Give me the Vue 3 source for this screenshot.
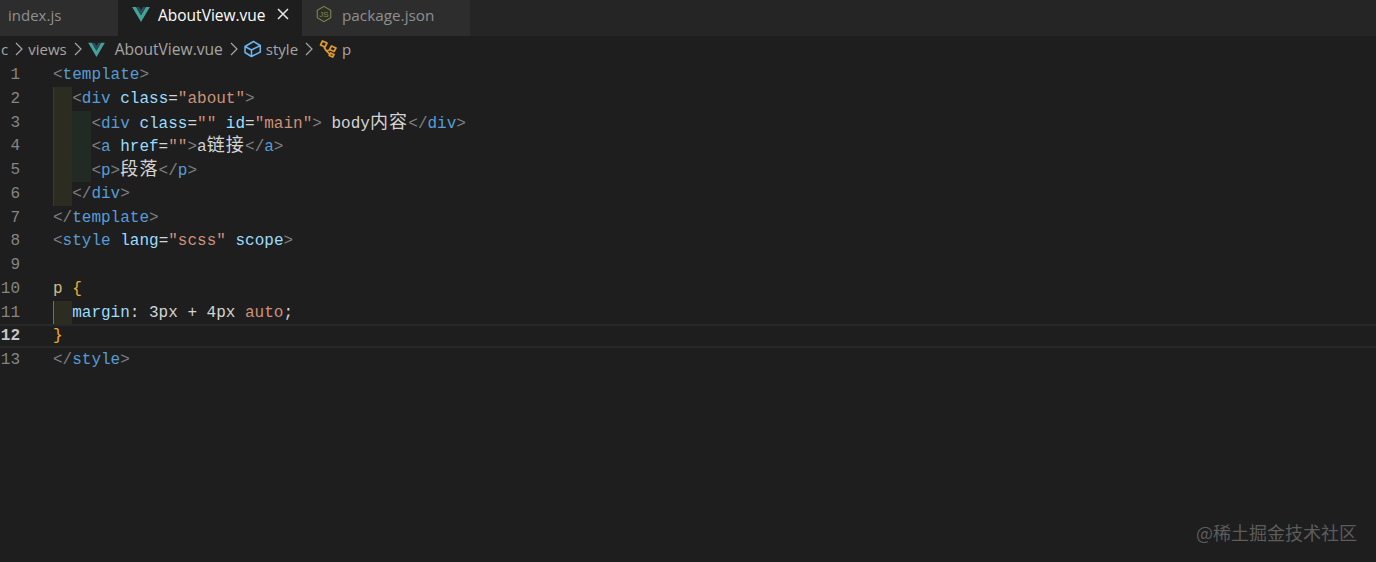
<script setup>
const P = 'pu', T = 'tg', A = 'at', S = 'st', X = 'tx', C = 'cj'
const lines = [
  { guides: [], tokens: [[P, '<'], [T, 'template'], [P, '>']] },
  { guides: ['g1'], tokens: [[P, '<'], [T, 'div'], [X, ' '], [A, 'class'], [X, '='], [S, '"about"'], [P, '>']] },
  { guides: ['g1', 'g2'], tokens: [[P, '<'], [T, 'div'], [X, ' '], [A, 'class'], [X, '='], [S, '""'], [X, ' '], [A, 'id'], [X, '='], [S, '"main"'], [P, '>'], [X, ' body'], [C, '内容'], [P, '</'], [T, 'div'], [P, '>']] },
  { guides: ['g1', 'g2'], tokens: [[P, '<'], [T, 'a'], [X, ' '], [A, 'href'], [X, '='], [S, '""'], [P, '>'], [X, 'a'], [C, '链接'], [P, '</'], [T, 'a'], [P, '>']] },
  { guides: ['g1', 'g2'], tokens: [[P, '<'], [T, 'p'], [P, '>'], [C, '段落'], [P, '</'], [T, 'p'], [P, '>']] },
  { guides: ['g1'], tokens: [[P, '</'], [T, 'div'], [P, '>']] },
  { guides: [], tokens: [[P, '</'], [T, 'template'], [P, '>']] },
  { guides: [], tokens: [[P, '<'], [T, 'style'], [X, ' '], [A, 'lang'], [X, '='], [S, '"scss"'], [X, ' '], [A, 'scope'], [P, '>']] },
  { guides: [], tokens: [] },
  { guides: [], tokens: [['se', 'p'], [X, ' '], ['br', '{']] },
  { guides: ['g3'], tokens: [[A, 'margin'], [X, ': 3px + 4px '], [S, 'auto'], [X, ';']] },
  { guides: [], current: true, tokens: [['br', '}']] },
  { guides: [], tokens: [[P, '</'], [T, 'style'], [P, '>']] },
]
</script>

<template>
  <div class="app">
    <div class="tabs">
      <div class="tab tab-index"><span class="name">index.js</span></div>
      <div class="tab tab-active">
        <svg class="vue" viewBox="0 0 20 18" width="18" height="16"><path d="M0 1h4.500L10 10.500 15.500 1H20L10 18z" fill="#42a594" /><path d="M4.500 1H8l2 3.500L12 1h3.500L10 10.500z" fill="#2f4a5a" /></svg>
        <span class="name active-name">AboutView.vue</span>
        <svg class="close" viewBox="0 0 14 14" width="14" height="14"><path d="M2 2l10 10M12 2L2 12" stroke="#e8e8e8" stroke-width="1.500" fill="none" /></svg>
      </div>
      <div class="tab tab-pkg">
        <svg class="js" viewBox="0 0 20 20" width="18" height="20"><path d="M10 1.500l7.500 4.300v8.400L10 18.500l-7.500-4.300V5.800z" fill="none" stroke="#7f8a4a" stroke-width="1.200" /><text x="10" y="13.500" text-anchor="middle" class="js-t">JS</text></svg>
        <span class="name pkg-name">package.json</span>
      </div>
    </div>
    <div class="crumbs">
      <span class="crumb cut">c</span>
      <svg class="chev" viewBox="0 0 8 14" width="8" height="14"><path d="M1 1l6 6-6 6" /></svg>
      <span class="crumb">views</span>
      <svg class="chev" viewBox="0 0 8 14" width="8" height="14"><path d="M1 1l6 6-6 6" /></svg>
      <svg class="vue-small" viewBox="0 0 20 18" width="17" height="15"><path d="M0 1h4.500L10 10.500 15.500 1H20L10 18z" fill="#42a594" /><path d="M4.500 1H8l2 3.500L12 1h3.500L10 10.500z" fill="#2f4a5a" /></svg>
      <span class="crumb file">AboutView.vue</span>
      <svg class="chev" viewBox="0 0 8 14" width="8" height="14"><path d="M1 1l6 6-6 6" /></svg>
      <svg class="cube" viewBox="0 0 18 18" width="19" height="18"><path d="M10 1.500l6.800 4v6.500L8 16.500 1.500 12.500V6.500zM1.500 6.500L8 10l8.800-4.500M8 10v6.500" fill="none" stroke="#6cb6f0" stroke-width="1.500" stroke-linejoin="round" /></svg>
      <span class="crumb">style</span>
      <svg class="chev" viewBox="0 0 8 14" width="8" height="14"><path d="M1 1l6 6-6 6" /></svg>
      <svg class="sel" viewBox="0 0 18 18" width="18" height="18"><path d="M3.500 1l4.500 2-2 4-4.500-2zM12.500 6l4.500 2-2 3.500-4.500-2zM11.500 13l3.500 1.500-1.300 2.500-3.500-1.500zM5 7l2 3.500h3.500M7 10.500l3.500 3.500" fill="none" stroke="#e09a30" stroke-width="1.700" stroke-linejoin="round" /></svg>
      <span class="crumb">p</span>
    </div>
    <div class="editor">
      <div v-for="(line, i) in lines" :key="i" class="line" :class="{ current: line.current }">
        <span class="num" :class="{ on: line.current }">{{ i + 1 }}</span>
        <span class="code">
          <span v-for="g in line.guides" :key="g" class="guide" :class="g"></span>
          <span v-for="(t, k) in line.tokens" :key="k" :class="t[0]">{{ t[1] }}</span>
        </span>
      </div>
      <div class="mark">@稀土掘金技术社区</div>
    </div>
  </div>
</template>

<style>
html, body { margin: 0; background: #1e1e1e; }
</style>

<style scoped>
.app {
  width: 1376px;
  height: 562px;
  background: #1e1e1e;
  overflow: hidden;
  display: flex;
  flex-direction: column;
  font-family: "Open Sans", "Noto Sans", sans-serif;
}
.tabs {
  height: 36px;
  display: flex;
  background: #252526;
  flex: none;
}
.tab {
  display: flex;
  align-items: center;
  background: #2d2d2d;
  font-size: 15px;
  color: #8f8f8f;
  box-sizing: border-box;
  padding-bottom: 6px;
}
.tab-index { width: 118px; padding-left: 8px; }
.tab-active { width: 184px; background: #1e1e1e; padding-left: 14px; }
.tab-pkg { width: 168px; padding-left: 13px; }
.vue { margin-right: 8px; margin-bottom: 3px; }
.active-name { color: #ffffff; font-size: 15.500px; }
.pkg-name { font-size: 15.300px; }
.close { margin-left: 10px; margin-bottom: 3px; }
.js { margin-right: 9px; margin-bottom: 2px; }
.js-t { font-size: 9px; fill: #7f8a4a; font-family: "Liberation Sans", sans-serif; }
.crumbs {
  height: 26px;
  display: flex;
  align-items: center;
  font-size: 15px;
  color: #a6a6a6;
  flex: none;
}
.crumb.cut { margin-left: 1px; }
.crumb.file { font-size: 15.600px; }
.chev { margin: 0 5px 0 7px; fill: none; stroke: #a6a6a6; stroke-width: 1.200; }
.vue-small { margin-right: 10px; margin-left: 1px; }
.cube { margin-right: 4px; margin-left: 0; }
.sel { margin-right: 5px; margin-left: 1px; }
.editor {
  position: relative;
  flex: 1;
  padding-top: 1px;
  font-family: "Liberation Mono", monospace;
  font-size: 16px;
}
.line {
  height: 23.750px;
  line-height: 25px;
  display: flex;
  white-space: pre;
  box-sizing: border-box;
}
.line.current {
  border-top: 2px solid #282828;
  border-bottom: 2px solid #282828;
  line-height: 21px;
}
.num {
  width: 20px;
  margin-right: 33px;
  text-align: right;
  color: #858585;
  flex: none;
}
.num.on { color: #c6c6c6; font-weight: 700; }
.code { display: block; height: 100%; color: #d4d4d4; }
.guide {
  display: inline-block;
  vertical-align: top;
  width: 19.200px;
  height: 23.750px;
  box-sizing: border-box;
}
.g1 { background: #2c2d20; border-left: 1px solid #3a3a2e; }
.g2 { background: #222a24; }
.g3 { background: #2c2d20; border-left: 1px solid #707070; }
.pu { color: #808080; }
.tg { color: #569cd6; }
.at { color: #9cdcfe; }
.st { color: #ce9178; }
.tx { color: #d4d4d4; }
.se { color: #d7ba7d; }
.br { color: #f0b030; }
.cj {
  font-family: "Noto Sans CJK SC", sans-serif;
  font-size: 18px;
  line-height: 1;
  letter-spacing: 1.200px;
  color: #d4d4d4;
}
.mark {
  position: absolute;
  right: 19px;
  bottom: 18px;
  font-family: "Noto Sans CJK SC", sans-serif;
  font-size: 18px;
  line-height: 24px;
  color: #5c5c5c;
}
</style>
